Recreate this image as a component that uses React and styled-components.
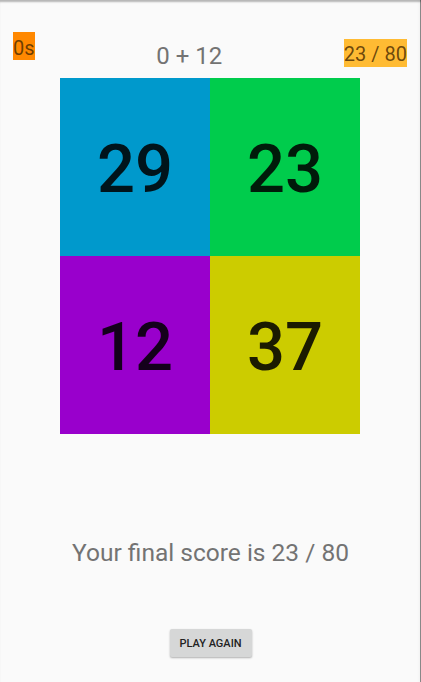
import React from "react";
import styled, { createGlobalStyle } from "styled-components";

const Global = createGlobalStyle`
  html, body { margin: 0; padding: 0; background: #fafafa; }
  body { font-family: Roboto, "Noto Sans", sans-serif; }
`;

const Screen = styled.div`
  width: 421px;
  height: 682px;
  box-sizing: border-box;
  background: #fafafa;
  display: flex;
  flex-direction: column;
  box-shadow: inset 0 3px 2px -1px rgba(0, 0, 0, 0.28), inset -1px 0 0 #8a8a8a,
    inset -4px 0 3px -2px rgba(0, 0, 0, 0.04);
`;

const Header = styled.div`
  height: 78px;
  display: flex;
  align-items: flex-start;
  padding: 0 14px 0 13px;
  box-sizing: border-box;
`;

const Badge = styled.div`
  margin-top: ${(p) => p.$top}px;
  background: ${(p) => p.$bg};
  color: rgba(70, 40, 0, 0.78);
  font-size: 20px;
  line-height: 23px;
  padding: ${(p) => p.$padTop}px 0 0;
  height: 28px;
  box-sizing: border-box;
  white-space: nowrap;
`;

const Equation = styled.div`
  flex: 1;
  text-align: center;
  margin-top: 42px;
  font-size: 24px;
  line-height: 28px;
  color: #737373;
`;

const Grid = styled.div`
  width: 300px;
  height: 356px;
  margin-left: 60px;
  display: grid;
  grid-template-columns: 1fr 1fr;
  grid-template-rows: 1fr 1fr;
`;

const Cell = styled.div`
  background: ${(p) => p.$bg};
  display: flex;
  align-items: center;
  justify-content: center;
  font-size: 67px;
  font-weight: 500;
  color: rgba(0, 0, 0, 0.87);
  padding-top: 3px;
  box-sizing: border-box;
`;

const FinalScore = styled.div`
  margin-top: 105px;
  text-align: center;
  font-size: 24.5px;
  line-height: 28px;
  color: #737373;
`;

const Button = styled.button`
  align-self: center;
  margin-top: 62px;
  width: 82px;
  height: 28px;
  border: none;
  border-radius: 2px;
  background: #d6d7d7;
  box-shadow: 0 1px 2px rgba(0, 0, 0, 0.3);
  font-family: Roboto, "Noto Sans", sans-serif;
  font-weight: 500;
  font-size: 11px;
  color: #222;
  padding: 0;
  text-transform: uppercase;
`;

const cells = [
  { n: 29, bg: "#0099cc" },
  { n: 23, bg: "#00cc4c" },
  { n: 12, bg: "#9900cc" },
  { n: 37, bg: "#cccc00" },
];

export default function App() {
  return (
    <>
      <Global />
      <Screen>
        <Header>
          <Badge $top={32} $padTop={5} $bg="#ff8800">0s</Badge>
          <Equation>0 + 12</Equation>
          <Badge $top={39} $padTop={4} $bg="#ffbb33">23 / 80</Badge>
        </Header>
        <Grid>
          {cells.map((c) => (
            <Cell key={c.n} $bg={c.bg}>{c.n}</Cell>
          ))}
        </Grid>
        <FinalScore>Your final score is 23 / 80</FinalScore>
        <Button>Play Again</Button>
      </Screen>
    </>
  );
}
